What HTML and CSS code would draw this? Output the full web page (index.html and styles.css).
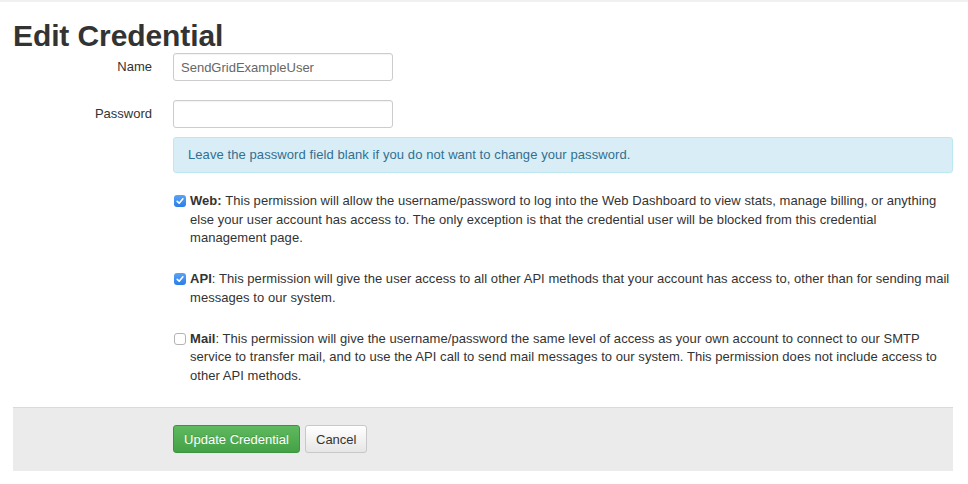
FILE: index.html
```html
<!DOCTYPE html>
<html>
<head>
<meta charset="utf-8">
<link rel="stylesheet" href="styles.css">
</head>
<body>
<div class="page">
  <h1 class="title">Edit Credential</h1>
  <form class="form">
    <div class="row">
      <label class="label">Name</label>
      <div class="control"><input class="input" type="text" value="SendGridExampleUser"></div>
    </div>
    <div class="row">
      <label class="label">Password</label>
      <div class="control">
        <input class="input" type="password" value="">
        <div class="alert">Leave the password field blank if you do not want to change your password.</div>
      </div>
    </div>
    <div class="row perm perm-first">
      <div></div>
      <div class="check">
        <span class="box checked"><svg viewBox="0 0 12 12" width="12" height="12"><path d="M3.2 6.3 L5.2 8.2 L8.9 3.8" fill="none" stroke="#fff" stroke-width="1.6" stroke-linecap="round" stroke-linejoin="round"/></svg></span>
        <p class="text"><b>Web:</b> This permission will allow the username/password to log into the Web Dashboard to view stats, manage billing, or anything else your user account has access to. The only exception is that the credential user will be blocked from this credential management page.</p>
      </div>
    </div>
    <div class="row perm">
      <div></div>
      <div class="check">
        <span class="box checked"><svg viewBox="0 0 12 12" width="12" height="12"><path d="M3.2 6.3 L5.2 8.2 L8.9 3.8" fill="none" stroke="#fff" stroke-width="1.6" stroke-linecap="round" stroke-linejoin="round"/></svg></span>
        <p class="text"><b>API</b>: This permission will give the user access to all other API methods that your account has access to, other than for sending mail messages to our system.</p>
      </div>
    </div>
    <div class="row perm">
      <div></div>
      <div class="check">
        <span class="box"></span>
        <p class="text"><b>Mail</b>: This permission will give the username/password the same level of access as your own account to connect to our SMTP service to transfer mail, and to use the API call to send mail messages to our system. This permission does not include access to other API methods.</p>
      </div>
    </div>
    <div class="actions">
      <div></div>
      <div class="buttons">
        <button type="button" class="btn btn-success">Update Credential</button>
        <button type="button" class="btn btn-default">Cancel</button>
      </div>
    </div>
  </form>
</div>
</body>
</html>
```
FILE: styles.css
```css
html, body {
  margin: 0;
  padding: 0;
  background: #fff;
}
body {
  font-family: "Liberation Sans", Arial, Helvetica, sans-serif;
  font-size: 13px;
  color: #333;
  border-top: 2px solid #f0f0f0;
}
.page {
  padding: 0 15px 0 13px;
}
.title {
  margin: 17px 0 0 0;
  font-size: 30px;
  line-height: 34px;
  font-weight: bold;
  color: #333;
  letter-spacing: -0.1px;
}
.form {
  margin: 0;
}
.row {
  display: grid;
  grid-template-columns: 140px 1fr;
  column-gap: 20px;
}
.row + .row {
  margin-top: 19px;
}
.label {
  text-align: right;
  align-self: start;
  line-height: 28px;
  height: 28px;
  color: #333;
  padding-right: 1px;
}
.control {
  display: flex;
  flex-direction: column;
}
.input {
  box-sizing: border-box;
  width: 220px;
  height: 28px;
  margin: 0;
  padding: 4px 7px;
  font-family: inherit;
  font-size: 13px;
  color: #666;
  border: 1px solid #ccc;
  border-radius: 3px;
  background: #fff;
  box-shadow: inset 0 1px 1px rgba(0,0,0,0.05);
  outline: none;
}
.alert {
  margin-top: 9px;
  box-sizing: border-box;
  height: 36px;
  padding: 0 14px;
  line-height: 34px;
  background: #d9edf7;
  border: 1px solid #bce8f1;
  border-radius: 3px;
  color: #31708f;
  font-size: 13px;
  letter-spacing: 0.08px;
}
.row.perm-first {
  margin-top: 19px;
}
.row.perm + .row.perm {
  margin-top: 22.5px;
}
.check {
  display: flex;
  align-items: flex-start;
  gap: 4px;
}
.box {
  flex: none;
  box-sizing: border-box;
  width: 12px;
  height: 12px;
  margin-top: 3px;
  margin-left: 1px;
  border: 1px solid #b4b4b4;
  border-radius: 3px;
  background: #fff;
  display: flex;
  align-items: center;
  justify-content: center;
}
.box.checked {
  border: none;
  background: linear-gradient(#5aa3f5, #2a7cea);
}
.box svg {
  display: block;
}
.text {
  margin: 0;
  line-height: 18.5px;
  font-size: 13px;
  color: #333;
  letter-spacing: 0.05px;
}
.text b {
  font-weight: bold;
}
.actions {
  display: grid;
  grid-template-columns: 140px 1fr;
  column-gap: 20px;
  margin-top: 22px;
  padding: 17px 0 18px 0;
  background: #ebebeb;
  border-top: 1px solid #dadada;
}
.buttons {
  display: flex;
  gap: 5px;
}
.btn {
  box-sizing: border-box;
  height: 28px;
  margin: 0;
  padding: 0 10px;
  font-family: inherit;
  font-size: 13px;
  border-radius: 3px;
  cursor: pointer;
}
.btn-success {
  color: #fff;
  background: linear-gradient(#5fba5f, #45a145);
  border: 1px solid #3e933e;
  text-shadow: 0 -1px 0 rgba(0,0,0,0.15);
  width: 127px;
}
.btn-default {
  color: #333;
  background: linear-gradient(#ffffff, #e6e6e6);
  border: 1px solid #c8c8c8;
  width: 62px;
}
```
